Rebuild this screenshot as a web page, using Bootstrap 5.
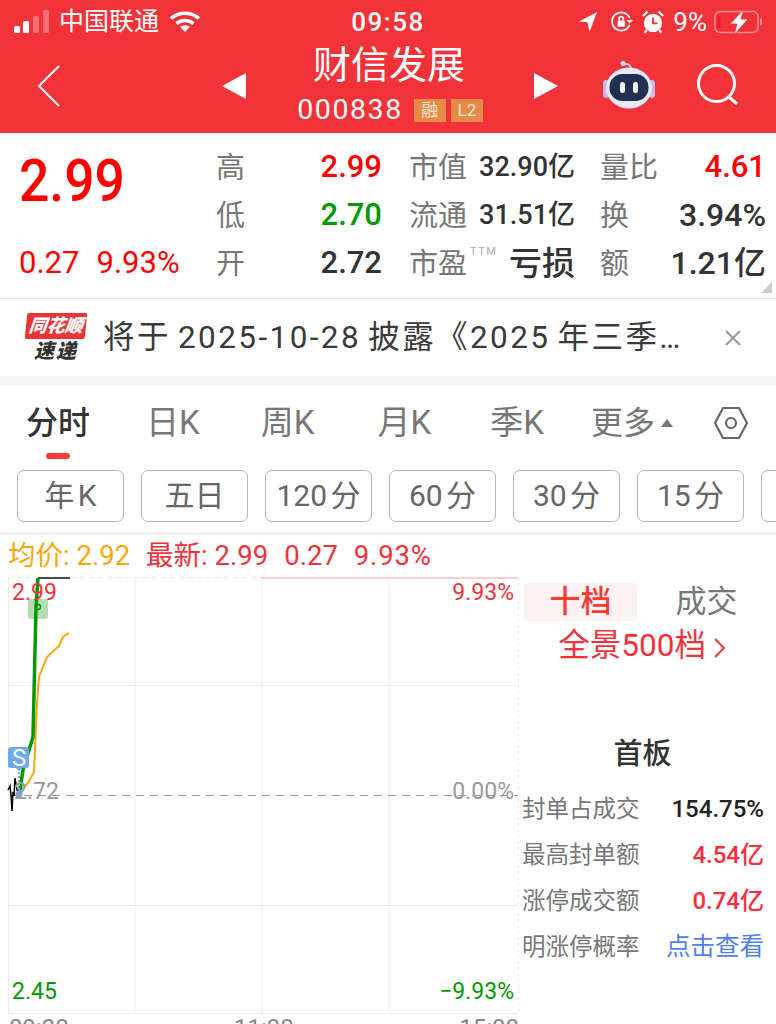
<!DOCTYPE html>
<html lang="zh-CN">
<head>
    <meta charset="UTF-8">
    <meta name="viewport" content="width=device-width, initial-scale=1.0">
    <title>财信发展</title>
    <link href="https://cdn.jsdelivr.net/npm/bootstrap@5.3.3/dist/css/bootstrap.min.css" rel="stylesheet">
    <style>
        html, body { height: 1024px; overflow: hidden; }
        body { background: #fff; color: #333; font-family: Roboto, "Noto Sans CJK SC", sans-serif; }
        .hq-head { background: #f13239; color: #fff; height: 133px; }
        .status-bar { height: 44px; padding: 0 14px; font-size: 25px; line-height: 44px; }
        .status-side { flex: 1 1 0; }
        .status-time { font-size: 26px; font-weight: 500; letter-spacing: 1.5px; }
        .carrier { margin-left: 9px; }
        .wifi { margin-left: 10px; }
        .lock-icon { margin-left: 12px; }
        .alarm-icon { margin-left: 9px; }
        .batt-pct { margin-left: 9px; font-size: 26px; }
        .batt-icon { margin-left: 7px; }
        .nav-row { height: 89px; padding-bottom: 5px; }
        .nav-back { width: 222px; padding-left: 37px; }
        .nav-center { width: 336px; }
        .name-block { width: 288px; margin-top: -4px; }
        .stock-name { font-size: 38px; line-height: 44px; margin-left: -2px; }
        .code-row { margin-top: 8px; height: 30px; }
        .stock-code { font-size: 28.5px; line-height: 30px; letter-spacing: 1.6px; margin-right: 11px; }
        .tag-mini { background: #e68c48; color: #fbe6d3; font-size: 17px; line-height: 23px; height: 23px; width: 32px; text-align: center; }
        .tag-gap { margin-left: 5px; }
        .nav-tools { padding-left: 45px; }
        .robot-icon { margin-top: -2px; }
        .search-icon { margin-left: 41px; margin-top: -2px; }
        .quote-box { height: 166px; border-bottom: 1px solid #e4e4e4; position: relative; }
        .quote-main { width: 216px; padding: 18px 0 0 19px; }
        .big-price { color: #fe0000; font-size: 60px; font-weight: 500; line-height: 60px; transform: scaleX(.89); transform-origin: left center; }
        .big-change { color: #fe0000; font-size: 31px; line-height: 36px; margin-top: 34px; gap: 17px; }
        .quote-grid { display: grid; grid-template-columns: 50px 116px 96px 122px 60px 106px; grid-auto-rows: 48px; align-items: center; padding-top: 10px; margin-top: 2px; white-space: nowrap; }
        .q-label { color: #777; font-size: 29px; }
        .q-label-wide { padding-left: 27px; position: relative; }
        .ttm-mark { position: absolute; left: 88px; top: 3px; font-size: 11px; line-height: 12px; letter-spacing: 1.5px; color: #aaa; }
        .q-value { font-weight: 500; text-align: right; font-size: 31px; margin-top: -4px; }
        .q-long { font-size: 32px; }
        .q-mid { font-weight: 500; font-size: 27px; text-align: right; padding-right: 25px; margin-top: -4px; }
        .q-strong { font-size: 33px; margin-top: -2px; }
        .c-up { color: #fe0000; }
        .c-down { color: #009900; }
        .corner-mark { position: absolute; right: 4px; bottom: 5px; width: 0; height: 0; border-left: 11px solid transparent; border-bottom: 11px solid #ccc; }
        .notice-bar { height: 86px; border-bottom: 9px solid #f5f5f5; padding-left: 26px; }
        .flash-logo { width: 60px; font-style: italic; font-weight: 900; text-align: center; }
        .flash-top { background: #ea3536; color: #fff; font-size: 18px; line-height: 26px; height: 26px; transform: skewX(-6deg); border-radius: 2px; }
        .flash-bot { color: #333; font-size: 20px; line-height: 24px; letter-spacing: 2px; }
        .notice-text { font-size: 31.5px; line-height: 40px; color: #3a3a3a; letter-spacing: 2.4px; word-spacing: -3px; margin-left: 17px; white-space: nowrap; }
        .notice-close { margin-right: 34px; }
        .tab-row { height: 85px; padding-bottom: 9px; font-size: 32px; color: #777; position: relative; }
        .tab-k { font-size: 33px; }
        .tab-on { color: #333; font-weight: 500; margin-left: 26px; }
        .tab-day { margin-left: 56px; }
        .tab-week { margin-left: 61px; }
        .tab-month { margin-left: 63px; }
        .tab-season { margin-left: 59px; }
        .tab-more { margin-left: 47px; }
        .tab-caret { margin-left: 5px; }
        .tab-hex { margin-left: 39px; }
        .tab-mark { position: absolute; left: 46px; top: 68px; width: 24px; height: 6px; border-radius: 3px; background: #fb3a35; }
        .period-row { height: 65px; overflow: hidden; border-bottom: 3px solid #f1f1f1; gap: 17px; padding-left: 17px; }
        .period-btn { flex: 0 0 107px; height: 52px; border: 1px solid #b5b5b5; border-radius: 7px; background: #fff; color: #666; font-size: 30px; line-height: 50px; text-align: center; white-space: nowrap; word-spacing: -4px; }
        .legend-row { height: 42px; font-size: 27.5px; line-height: 42px; padding-left: 8px; color: #f2323a; white-space: nowrap; }
        .legend-avg { color: #fba70b; }
        .legend-pct { letter-spacing: .8px; }
        .chart-wrap { position: relative; flex: 0 0 519px; height: 447px; }
        .chart-wrap svg { position: absolute; left: 0; top: 0; }
        .chart-lab { position: absolute; font-size: 23px; line-height: 26px; }
        .lab-left { left: 12px; }
        .lab-right { right: 5px; }
        .lab-top { top: 3px; color: #f2323a; }
        .lab-mid { top: 202px; color: #999; }
        .lab-low { top: 402px; color: #009900; }
        .lab-s { left: 12px; top: 168px; color: #fff; font-size: 24px; }
        .lab-open { left: 14px; }
        .lab-time { top: 438px; color: #888; font-size: 24px; }
        .time-a { left: 9px; }
        .time-b { left: 234px; }
        .time-c { right: 0; }
        .side-panel { flex: 1 1 auto; padding: 6px 12px 0 5px; }
        .side-tab { height: 38px; font-size: 31px; line-height: 38px; text-align: center; border-radius: 4px; }
        .side-on { background: #fdf2f2; color: #fb3a35; font-weight: 500; flex: 0 0 113px; }
        .side-off { color: #777; flex: 1 1 auto; padding-left: 12px; }
        .side-link { color: #f2323a; font-size: 31.5px; line-height: 44px; text-align: center; margin-top: 3px; margin-left: -4px; white-space: nowrap; }
        .board-title { font-size: 29px; font-weight: 500; text-align: center; line-height: 40px; margin-top: 66px; margin-bottom: 12px; margin-left: -3px; }
        .side-line { height: 46px; font-size: 23.5px; line-height: 46px; color: #777; margin-left: -2px; }
        .side-line b { font-weight: 500; font-size: 24px; color: #fb2d3c; }
        .side-line b.val-dark { color: #222; }
        .blue-link { color: #4f7ef0; font-size: 24.5px; }
    </style>
</head>
<body>
    <div class="hq-head">
        <div class="status-bar d-flex align-items-center">
            <div class="status-side d-flex align-items-center">
                <svg width="36" height="24" viewBox="0 0 36 24"><rect x="0" y="16" width="6" height="7" rx="1.5" fill="#fff"/><rect x="9" y="11" width="6" height="12" rx="1.5" fill="#fff"/><rect x="19" y="6" width="6" height="17" rx="1.5" fill="#fff" opacity=".3"/><rect x="29" y="0" width="6" height="23" rx="1.5" fill="#fff" opacity=".3"/></svg>
                <span class="carrier">中国联通</span>
                <svg class="wifi" width="32" height="24" viewBox="0 0 32 24" fill="none" stroke="#fff" stroke-width="3.6"><path d="M2 8.500C10 1.500 22 1.500 30 8.500"/><path d="M7.500 13.500C12.500 9.500 19.500 9.500 24.500 13.500"/><path d="M16 22l-4.800-5.200c3-2 6.600-2 9.600 0z" fill="#fff" stroke="none"/></svg>
            </div>
            <div class="status-time">09:58</div>
            <div class="status-side d-flex align-items-center justify-content-end">
                <svg width="20" height="22" viewBox="0 0 20 22"><path d="M19 1L1 10.500l8.500.8L11.500 21z" fill="#fff"/></svg>
                <svg class="lock-icon" width="23" height="24" viewBox="0 0 24 24" fill="none" stroke="#fff" stroke-width="1.800"><path d="M20.500 15A9.500 9.500 0 1 1 20.500 8"/><path d="M24 10l-3.500 3.500L17 10" fill="#fff" stroke="none"/><rect x="8" y="10.500" width="7.500" height="6.500" rx="1" fill="#fff" stroke="none"/><path d="M9.500 10.500V8.500a2.200 2.200 0 0 1 4.400 0v2"/></svg>
                <svg class="alarm-icon" width="22" height="24" viewBox="0 0 24 26"><circle cx="12" cy="14" r="10" fill="#fff"/><path d="M12 8v6.500h5" fill="none" stroke="#f13239" stroke-width="2"/><path d="M1 6.500L6 1.500M23 6.500l-5-5M5 22l-2 3M19 22l2 3" stroke="#fff" stroke-width="2.500"/></svg>
                <span class="batt-pct">9%</span>
                <svg class="batt-icon" width="48" height="26" viewBox="0 0 48 26"><rect x="1" y="2.500" width="43" height="21" rx="5" fill="none" stroke="#fff" stroke-opacity=".45" stroke-width="1.500"/><rect x="3.500" y="7" width="3" height="12" fill="#f7182a"/><rect x="46" y="9.500" width="2" height="7" rx="1" fill="#fff" opacity=".5"/><path d="M30 0L16 15h7l-3 11 14-16h-7z" fill="#fff" stroke="#f13239" stroke-width=".8"/></svg>
            </div>
        </div>
        <div class="nav-row d-flex align-items-center">
            <div class="nav-back d-flex">
                <svg width="24" height="42" viewBox="0 0 24 42" fill="none" stroke="#fff" stroke-width="2"><path d="M22 1L2 21l20 20"/></svg>
            </div>
            <div class="nav-center d-flex align-items-center justify-content-between">
                <svg width="24" height="28" viewBox="0 0 24 28"><path d="M24 1v26L0 14z" fill="#fff"/></svg>
                <div class="name-block text-center">
                    <div class="stock-name">财信发展</div>
                    <div class="code-row d-flex align-items-center justify-content-center">
                        <span class="stock-code">000838</span>
                        <span class="tag-mini">融</span><span class="tag-mini tag-gap">L2</span>
                    </div>
                </div>
                <svg width="24" height="28" viewBox="0 0 24 28"><path d="M0 1v26L24 14z" fill="#fff"/></svg>
            </div>
            <div class="nav-tools d-flex align-items-center">
                <svg class="robot-icon" width="52" height="48" viewBox="0 0 52 48">
                    <path d="M28 9c0-4-1-6-6-6" fill="none" stroke="#d9d3ee" stroke-width="2"/>
                    <circle cx="20" cy="2.500" r="2.500" fill="#e9e4f7"/>
                    <rect x="0" y="19" width="6" height="18" rx="3" fill="#c5bbe8"/><rect x="46" y="19" width="6" height="18" rx="3" fill="#c5bbe8"/>
                    <ellipse cx="26" cy="27" rx="23" ry="20.500" fill="#ece8f8"/>
                    <rect x="6.500" y="13" width="39" height="27" rx="13" fill="#22304f"/>
                    <rect x="17" y="21" width="5" height="11" rx="2.500" fill="#f3f3fb"/><rect x="30" y="21" width="5" height="11" rx="2.500" fill="#f3f3fb"/>
                </svg>
                <svg class="search-icon" width="44" height="44" viewBox="0 0 44 44" fill="none" stroke="#fff" stroke-width="3"><circle cx="20.500" cy="20.500" r="18"/><path d="M33 34l8 7"/></svg>
            </div>
        </div>
    </div>

    <div class="quote-box d-flex">
        <div class="quote-main">
            <div class="big-price">2.99</div>
            <div class="big-change d-flex"><span>0.27</span><span>9.93%</span></div>
        </div>
        <div class="quote-grid">
            <span class="q-label">高</span><span class="q-value c-up">2.99</span>
            <span class="q-label q-label-wide">市值</span><span class="q-mid">32.90亿</span>
            <span class="q-label">量比</span><span class="q-value c-up">4.61</span>
            <span class="q-label">低</span><span class="q-value c-down">2.70</span>
            <span class="q-label q-label-wide">流通</span><span class="q-mid">31.51亿</span>
            <span class="q-label">换</span><span class="q-value q-long">3.94%</span>
            <span class="q-label">开</span><span class="q-value">2.72</span>
            <span class="q-label q-label-wide">市盈<span class="ttm-mark">TTM</span></span><span class="q-mid q-strong">亏损</span>
            <span class="q-label">额</span><span class="q-value q-long">1.21亿</span>
        </div>
        <span class="corner-mark"></span>
    </div>

    <div class="notice-bar d-flex align-items-center">
        <div class="flash-logo">
            <div class="flash-top">同花顺</div>
            <div class="flash-bot">速递</div>
        </div>
        <div class="notice-text flex-grow-1">将于 2025-10-28 披露《2025 年三季…</div>
        <svg class="notice-close" width="18" height="18" viewBox="0 0 18 18" stroke="#999" stroke-width="2"><path d="M2 2l14 14M16 2L2 16"/></svg>
    </div>

    <div class="tab-row d-flex align-items-center">
        <span class="tab-on">分时</span>
        <span class="tab-k tab-day">日K</span>
        <span class="tab-k tab-week">周K</span>
        <span class="tab-k tab-month">月K</span>
        <span class="tab-k tab-season">季K</span>
        <span class="tab-more">更多</span>
        <svg class="tab-caret" width="14" height="10" viewBox="0 0 14 10"><path d="M7 1l6 8H1z" fill="#777"/></svg>
        <svg class="tab-hex" width="36" height="34" viewBox="0 0 36 34" fill="none" stroke="#666" stroke-width="2.200"><path d="M10 2h16l8 15-8 15H10L2 17z"/><circle cx="18" cy="17" r="5"/></svg>
        <span class="tab-mark"></span>
    </div>

    <div class="period-row d-flex">
        <span class="period-btn">年 K</span>
        <span class="period-btn">五日</span>
        <span class="period-btn">120 分</span>
        <span class="period-btn">60 分</span>
        <span class="period-btn">30 分</span>
        <span class="period-btn">15 分</span>
        <span class="period-btn"></span>
    </div>

    <div class="legend-row"><span class="legend-avg">均价: 2.92</span><span class="ms-3">最新: 2.99</span><span class="ms-3">0.27</span><span class="ms-3 legend-pct">9.93%</span></div>

    <div class="d-flex">
        <div class="chart-wrap">
            <svg width="519" height="447" viewBox="0 577 519 447" fill="none">
                <path d="M8.500 577V1014M135 577V1014M262 577V1014M389 577V1014M8 685.500H518M8 905.500H518M8 1013.500H518" stroke="#ececec"/>
                <path d="M518.500 577V1014" stroke="#f5e4e4" stroke-dasharray="3 3"/>
                <path d="M8 577H262" stroke="#e9d7c8" stroke-dasharray="5 4"/>
                <path d="M262 578H518" stroke="#f3a0a0"/>
                <path d="M262 577H518" stroke="#edd0c0" stroke-dasharray="5 4"/>
                <path d="M10 795.500H518" stroke="#999" stroke-dasharray="8 6"/>
                <rect x="28" y="599" width="20" height="20" rx="2" fill="#b5dcb5"/>
                <path d="M38 578H70" stroke="#111" stroke-width="1.500"/>
                <path d="M16 795L28 783 34 772 37 703 39 677 47 657 59 646 63 637 69 633" stroke="#fba70b" stroke-width="2"/>
                <path d="M20 790L23 770 33 737 36 607 38 578" stroke="#009a00" stroke-width="3.500"/>
                <circle cx="38" cy="607" r="2.500" stroke="#009a00" stroke-width="1.500"/>
                <path d="M8 790L10 786 11 795 12 811 13 792 14 796 15 778 17 790 19 792" stroke="#000" stroke-width="1.500"/>
                <path d="M19 768V790" stroke="#6da9ee" stroke-width="2" stroke-dasharray="2 2"/>
                <circle cx="19" cy="794" r="3.500" fill="#6da9ee"/>
                <path d="M11 747h15a3 3 0 0 1 3 3v15a3 3 0 0 1-3 3h-4l-3 3-3-3h-5a3 3 0 0 1-3-3v-15a3 3 0 0 1 3-3z" fill="#6da9ee"/>
            </svg>
            <span class="chart-lab lab-left lab-top">2.99</span>
            <span class="chart-lab lab-s">S</span>
            <span class="chart-lab lab-open lab-mid">2.72</span>
            <span class="chart-lab lab-right lab-top">9.93%</span>
            <span class="chart-lab lab-right lab-mid">0.00%</span>
            <span class="chart-lab lab-left lab-low">2.45</span>
            <span class="chart-lab lab-right lab-low">−9.93%</span>
            <span class="chart-lab lab-time time-a">09:30</span>
            <span class="chart-lab lab-time time-b">11:30</span>
            <span class="chart-lab lab-time time-c">15:00</span>
        </div>
        <div class="side-panel">
            <div class="d-flex">
                <div class="side-tab side-on">十档</div>
                <div class="side-tab side-off">成交</div>
            </div>
            <div class="side-link">全景500档 <svg width="12" height="20" viewBox="0 0 12 20" fill="none" stroke="#f2323a" stroke-width="2"><path d="M1 1l9 9-9 9"/></svg></div>
            <div class="board-title">首板</div>
            <div class="side-line d-flex justify-content-between"><span>封单占成交</span><b class="val-dark">154.75%</b></div>
            <div class="side-line d-flex justify-content-between"><span>最高封单额</span><b>4.54亿</b></div>
            <div class="side-line d-flex justify-content-between"><span>涨停成交额</span><b>0.74亿</b></div>
            <div class="side-line d-flex justify-content-between"><span>明涨停概率</span><span class="blue-link">点击查看</span></div>
        </div>
    </div>
</body>
</html>
